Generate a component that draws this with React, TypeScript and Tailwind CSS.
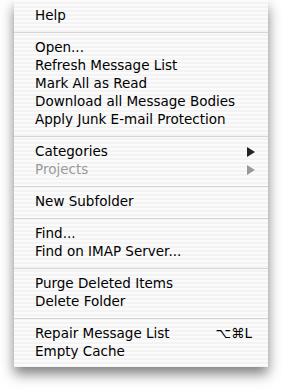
import React from 'react';

type Item =
  | { kind: 'sep' }
  | { kind: 'item'; label: string; disabled?: boolean; submenu?: boolean; shortcut?: string };

const ITEMS: Item[] = [
  { kind: 'item', label: 'Help' },
  { kind: 'sep' },
  { kind: 'item', label: 'Open...' },
  { kind: 'item', label: 'Refresh Message List' },
  { kind: 'item', label: 'Mark All as Read' },
  { kind: 'item', label: 'Download all Message Bodies' },
  { kind: 'item', label: 'Apply Junk E-mail Protection' },
  { kind: 'sep' },
  { kind: 'item', label: 'Categories', submenu: true },
  { kind: 'item', label: 'Projects', submenu: true, disabled: true },
  { kind: 'sep' },
  { kind: 'item', label: 'New Subfolder' },
  { kind: 'sep' },
  { kind: 'item', label: 'Find...' },
  { kind: 'item', label: 'Find on IMAP Server...' },
  { kind: 'sep' },
  { kind: 'item', label: 'Purge Deleted Items' },
  { kind: 'item', label: 'Delete Folder' },
  { kind: 'sep' },
  { kind: 'item', label: 'Repair Message List', shortcut: '⌥⌘L' },
  { kind: 'item', label: 'Empty Cache' },
];

function Arrow({ disabled }: { disabled?: boolean }) {
  return (
    <svg width="8" height="10" viewBox="0 0 8 10" className={disabled ? 'text-[#9a9a9a]' : 'text-[#222]'}>
      <polygon points="0,0 8,5 0,10" fill="currentColor" />
    </svg>
  );
}

export default function App() {
  return (
    <div className="w-[282px] h-[390px] bg-white overflow-hidden font-['DejaVu_Sans',sans-serif]">
      {/* context menu panel */}
      <div className="ml-[14px] w-[254px] h-[367px] pt-[7px] bg-[repeating-linear-gradient(to_bottom,#fbfbfb_0px,#fbfbfb_2px,#f3f3f3_2px,#f3f3f3_4px)] shadow-[0_7px_12px_rgba(0,0,0,0.5)]">
        {ITEMS.map((it, i) =>
          it.kind === 'sep' ? (
            <div key={i} className="h-[14px] flex items-center">
              <div className="w-full h-px bg-[#d6d6d6]" />
            </div>
          ) : (
            <div
              key={i}
              className={`h-[18px] flex items-center pl-[21px] pr-[13px] text-[13.5px] leading-none ${
                it.disabled ? 'text-[#9a9a9a]' : 'text-black'
              }`}
            >
              <span className="flex-1 whitespace-nowrap">{it.label}</span>
              {it.submenu && <Arrow disabled={it.disabled} />}
              {it.shortcut && <span className="pr-[3px]">{it.shortcut}</span>}
            </div>
          )
        )}
      </div>
    </div>
  );
}
